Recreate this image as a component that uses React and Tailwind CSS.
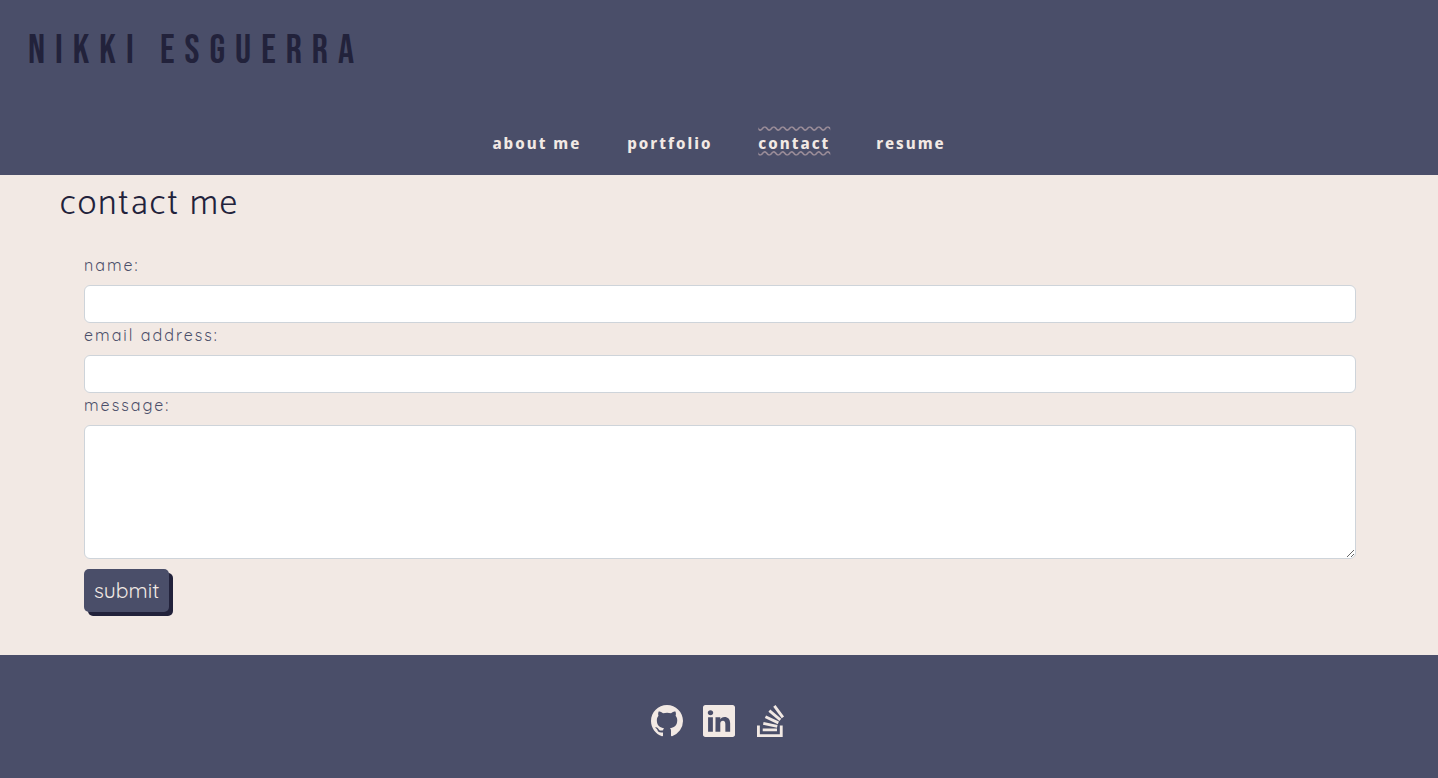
import { BsGithub, BsLinkedin, BsStackOverflow } from "react-icons/bs";

const navItems = [
  { label: "about me", href: "#about" },
  { label: "portfolio", href: "#portfolio" },
  { label: "contact", href: "#contact", active: true },
  { label: "resume", href: "#resume" },
];

const socials = [
  { label: "GitHub", href: "#github", Icon: BsGithub },
  { label: "LinkedIn", href: "#linkedin", Icon: BsLinkedin },
  { label: "Stack Overflow", href: "#stack-overflow", Icon: BsStackOverflow },
];

const labelClass =
  "mb-2 block font-['Quicksand','Lato',sans-serif] text-base leading-6 font-normal tracking-[2px] text-[#4a4e69]";
const fieldClass =
  "block w-full rounded-md border border-[#ced4da] bg-white px-3 py-1.5 text-base text-[#22223b] outline-none focus:border-[#4a4e69]";

function Header() {
  return (
    <header className="bg-[#4a4e69] px-7 pt-6 pb-4">
      <h1 className="font-['Bebas_Neue','Liberation_Sans_Narrow',sans-serif] text-[40px] leading-[54px] font-normal tracking-[10px] text-[#22223b] uppercase">
        Nikki Esguerra
      </h1>
      <nav className="mt-[50px] flex flex-wrap justify-center gap-x-[46px] gap-y-2">
        {navItems.map(({ label, href, active }) => (
          <a
            key={label}
            href={href}
            aria-current={active ? "page" : undefined}
            className={`font-['Noto_Sans_Display','Noto_Sans',sans-serif] text-base leading-[31px] font-bold tracking-[2px] text-[#f2e9e4] ${
              active
                ? "[text-decoration:underline_overline_wavy_#9a8c98_auto]"
                : ""
            }`}
          >
            {label}
          </a>
        ))}
      </nav>
    </header>
  );
}

function ContactForm() {
  return (
    <main className="flex-1 bg-[#f2e9e4] px-[60px] pt-2 pb-[43px]">
      <h2 className="font-['Catamaran','Noto_Sans',sans-serif] text-[35px] leading-[42px] font-light tracking-[2px] text-[#22223b]">
        contact me
      </h2>
      <form className="mt-[28px] pr-[22px] pl-6" onSubmit={(e) => e.preventDefault()}>
        <label htmlFor="name" className={labelClass}>
          name:
        </label>
        <input id="name" type="text" className={`${fieldClass} h-[38px]`} />
        <label htmlFor="email" className={labelClass}>
          email address:
        </label>
        <input id="email" type="email" className={`${fieldClass} h-[38px]`} />
        <label htmlFor="message" className={labelClass}>
          message:
        </label>
        <textarea id="message" className={`${fieldClass} h-[134px] resize`} />
        <button
          type="submit"
          className="mt-[10px] block rounded-[5px] bg-[#4a4e69] px-[10px] py-[6px] font-['Quicksand','Lato',sans-serif] text-[21px] leading-[31px] text-[#f2e9e4] shadow-[4px_4px_0_#22223b]"
        >
          submit
        </button>
      </form>
    </main>
  );
}

function Footer() {
  return (
    <footer className="flex justify-center gap-5 bg-[#4a4e69] pt-[50px] pb-[41px]">
      {socials.map(({ label, href, Icon }) => (
        <a key={label} href={href} aria-label={label} className="text-[#f2e9e4]">
          <Icon className="size-8" />
        </a>
      ))}
    </footer>
  );
}

export default function App() {
  return (
    <div className="flex min-h-screen flex-col">
      <Header />
      <ContactForm />
      <Footer />
    </div>
  );
}
